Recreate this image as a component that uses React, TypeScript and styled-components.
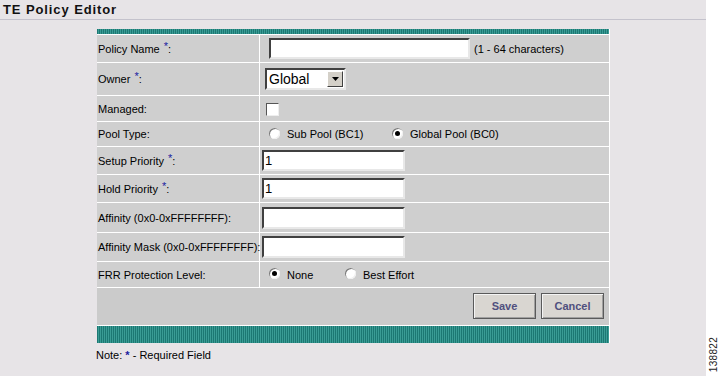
import React from 'react';
import styled, {createGlobalStyle} from 'styled-components';

const GlobalStyle = createGlobalStyle`
  html, body {
    margin: 0;
    padding: 0;
    background: #ffffff;
  }
  body {
    font-family: 'Liberation Sans', Arial, sans-serif;
    font-size: 11px;
    color: #000;
  }
`;

const Page = styled.div`
  display: flex;
  width: 720px;
  height: 376px;
  overflow: hidden;
`;

const Main = styled.div`
  width: 706px;
  background: #e7e4e7;
  display: flex;
  flex-direction: column;
`;

const Side = styled.div`
  flex: 1;
  background: #ffffff;
  display: flex;
  align-items: flex-end;
  justify-content: center;
  padding-bottom: 4px;
`;

const FigureNo = styled.span`
  writing-mode: vertical-rl;
  transform: rotate(180deg);
  font-size: 10px;
  color: #222;
  letter-spacing: 0.3px;
`;

const Title = styled.h1`
  margin: 0;
  padding: 2px 0 0 3px;
  height: 17px;
  font-size: 13px;
  font-weight: bold;
  letter-spacing: 0.9px;
  color: #111;
`;

const Rule = styled.div`
  height: 1px;
  background: #c4c2cc;
  margin-bottom: 9px;
`;

const Panel = styled.div`
  margin-left: 97px;
  width: 513px;
  display: grid;
  grid-template-columns: 162px 1fr;
  column-gap: 1px;
  row-gap: 1px;
  background: #ffffff;
  padding-right: 1px;
  box-sizing: border-box;
`;

const Stripe = styled.div<{h: number}>`
  grid-column: 1 / -1;
  height: ${p => p.h}px;
  background: repeating-linear-gradient(
    90deg,
    #1c7873 0 1px,
    #3a9c95 1px 2px
  );
`;

const Label = styled.div<{h: number}>`
  height: ${p => p.h}px;
  background: #cfcfcf;
  display: flex;
  align-items: center;
  padding-left: 1px;
  white-space: nowrap;
`;

const Value = styled.div<{indent: number}>`
  background: #cfcfcf;
  display: flex;
  align-items: center;
  padding-left: ${p => p.indent}px;
  gap: 4px;
`;

const Star = styled.span`
  color: #1a1aa0;
  position: relative;
  top: -3px;
  margin-left: 4px;
`;

const TextBox = styled.input<{w: number; hh: number}>`
  width: ${p => p.w}px;
  height: ${p => p.hh}px;
  box-sizing: border-box;
  border-style: solid;
  border-width: 2px;
  border-color: #404040 #e8e8e8 #e8e8e8 #404040;
  background: #fff;
  font-family: 'Liberation Sans', Arial, sans-serif;
  font-size: 13px;
  padding: 0 1px;
  margin: 0;
  outline: none;
`;

const Hint = styled.span`
  font-size: 11px;
`;

const Select = styled.div`
  width: 81px;
  height: 22px;
  box-sizing: border-box;
  border-style: solid;
  border-width: 2px;
  border-color: #404040 #e8e8e8 #e8e8e8 #404040;
  background: #fff;
  display: flex;
  align-items: center;
  justify-content: space-between;
  font-size: 14px;
  padding-left: 2px;
`;

const SelectButton = styled.span`
  width: 16px;
  height: 16px;
  box-sizing: border-box;
  background: #d4d0c8;
  border: 1px solid;
  border-color: #fff #404040 #404040 #fff;
  display: flex;
  align-items: center;
  justify-content: center;
  margin-right: 1px;
`;

const Check = styled.span`
  width: 13px;
  height: 13px;
  box-sizing: border-box;
  background: #fff;
  border: 1px solid;
  border-color: #555 #eee #eee #555;
  margin-top: 2px;
`;

const RadioGroup = styled.label<{w: number}>`
  display: flex;
  align-items: center;
  gap: 7px;
  min-width: ${p => p.w}px;
`;

const RadioDot = styled.span<{on: boolean}>`
  width: 11px;
  height: 11px;
  border-radius: 50%;
  background: #fff;
  box-shadow: inset 1px 1px 0 #7a7a7a, inset -1px -1px 0 #f0f0f0;
  display: flex;
  align-items: center;
  justify-content: center;
  position: relative;
  top: -1px;
  &::after {
    content: '';
    width: 5px;
    height: 5px;
    border-radius: 50%;
    background: ${p => (p.on ? '#000' : 'transparent')};
  }
`;

const ButtonBar = styled.div`
  grid-column: 1 / -1;
  height: 37px;
  background: #cbcbcb;
  display: flex;
  justify-content: flex-end;
  align-items: flex-start;
  padding: 5px 5px 0 0;
  box-sizing: border-box;
  gap: 5px;
`;

const Button = styled.button<{w: number}>`
  width: ${p => p.w}px;
  height: 26px;
  background: #d9d6d1;
  border: 1px solid #5a5a5a;
  box-shadow: inset 1px 1px 0 #f4f4f4, inset -1px -1px 0 #a0a0a0;
  font-family: 'Liberation Sans', Arial, sans-serif;
  font-size: 11px;
  font-weight: bold;
  color: #50507e;
  padding: 0;
  cursor: pointer;
`;

const Note = styled.div`
  margin: 6px 0 0 96px;
  font-size: 11px;
`;

const NoteStar = styled.span`
  color: #1a1aa0;
  font-weight: bold;
`;

const Req = ({text}: {text: string}) => (
  <>
    {text}
    <Star>*</Star>:
  </>
);

const Radio = ({on, text, w}: {on: boolean; text: string; w: number}) => (
  <RadioGroup w={w}>
    <RadioDot on={on} />
    {text}
  </RadioGroup>
);

export default function App() {
  return (
    <Page>
      <GlobalStyle />
      <Main>
        <Title>TE Policy Editor</Title>
        <Rule />
        <Panel>
          <Stripe h={5} />

          <Label h={27}>
            <Req text="Policy Name" />
          </Label>
          <Value indent={9}>
            <TextBox w={201} hh={21} defaultValue="" />
            <Hint>(1 - 64 characters)</Hint>
          </Value>

          <Label h={32}>
            <Req text="Owner" />
          </Label>
          <Value indent={5}>
            <Select>
              Global
              <SelectButton>
                <svg width="7" height="4" viewBox="0 0 7 4">
                  <path d="M0 0h7L3.5 4z" fill="#000" />
                </svg>
              </SelectButton>
            </Select>
          </Value>

          <Label h={25}>Managed:</Label>
          <Value indent={6}>
            <Check />
          </Value>

          <Label h={24}>Pool Type:</Label>
          <Value indent={9}>
            <Radio on={false} text="Sub Pool (BC1)" w={119} />
            <Radio on text="Global Pool (BC0)" w={120} />
          </Value>

          <Label h={27}>
            <Req text="Setup Priority" />
          </Label>
          <Value indent={2}>
            <TextBox w={143} hh={21} defaultValue="1" />
          </Value>

          <Label h={27}>
            <Req text="Hold Priority" />
          </Label>
          <Value indent={2}>
            <TextBox w={143} hh={21} defaultValue="1" />
          </Value>

          <Label h={29}>Affinity (0x0-0xFFFFFFFF):</Label>
          <Value indent={2}>
            <TextBox w={143} hh={22} defaultValue="" />
          </Value>

          <Label h={28}>Affinity Mask (0x0-0xFFFFFFFF):</Label>
          <Value indent={2}>
            <TextBox w={143} hh={22} defaultValue="" />
          </Value>

          <Label h={25}>FRR Protection Level:</Label>
          <Value indent={9}>
            <Radio on text="None" w={72} />
            <Radio on={false} text="Best Effort" w={80} />
          </Value>

          <ButtonBar>
            <Button w={63}>Save</Button>
            <Button w={63}>Cancel</Button>
          </ButtonBar>

          <Stripe h={17} />
        </Panel>
        <Note>
          Note: <NoteStar>*</NoteStar> - Required Field
        </Note>
      </Main>
      <Side>
        <FigureNo>138822</FigureNo>
      </Side>
    </Page>
  );
}
